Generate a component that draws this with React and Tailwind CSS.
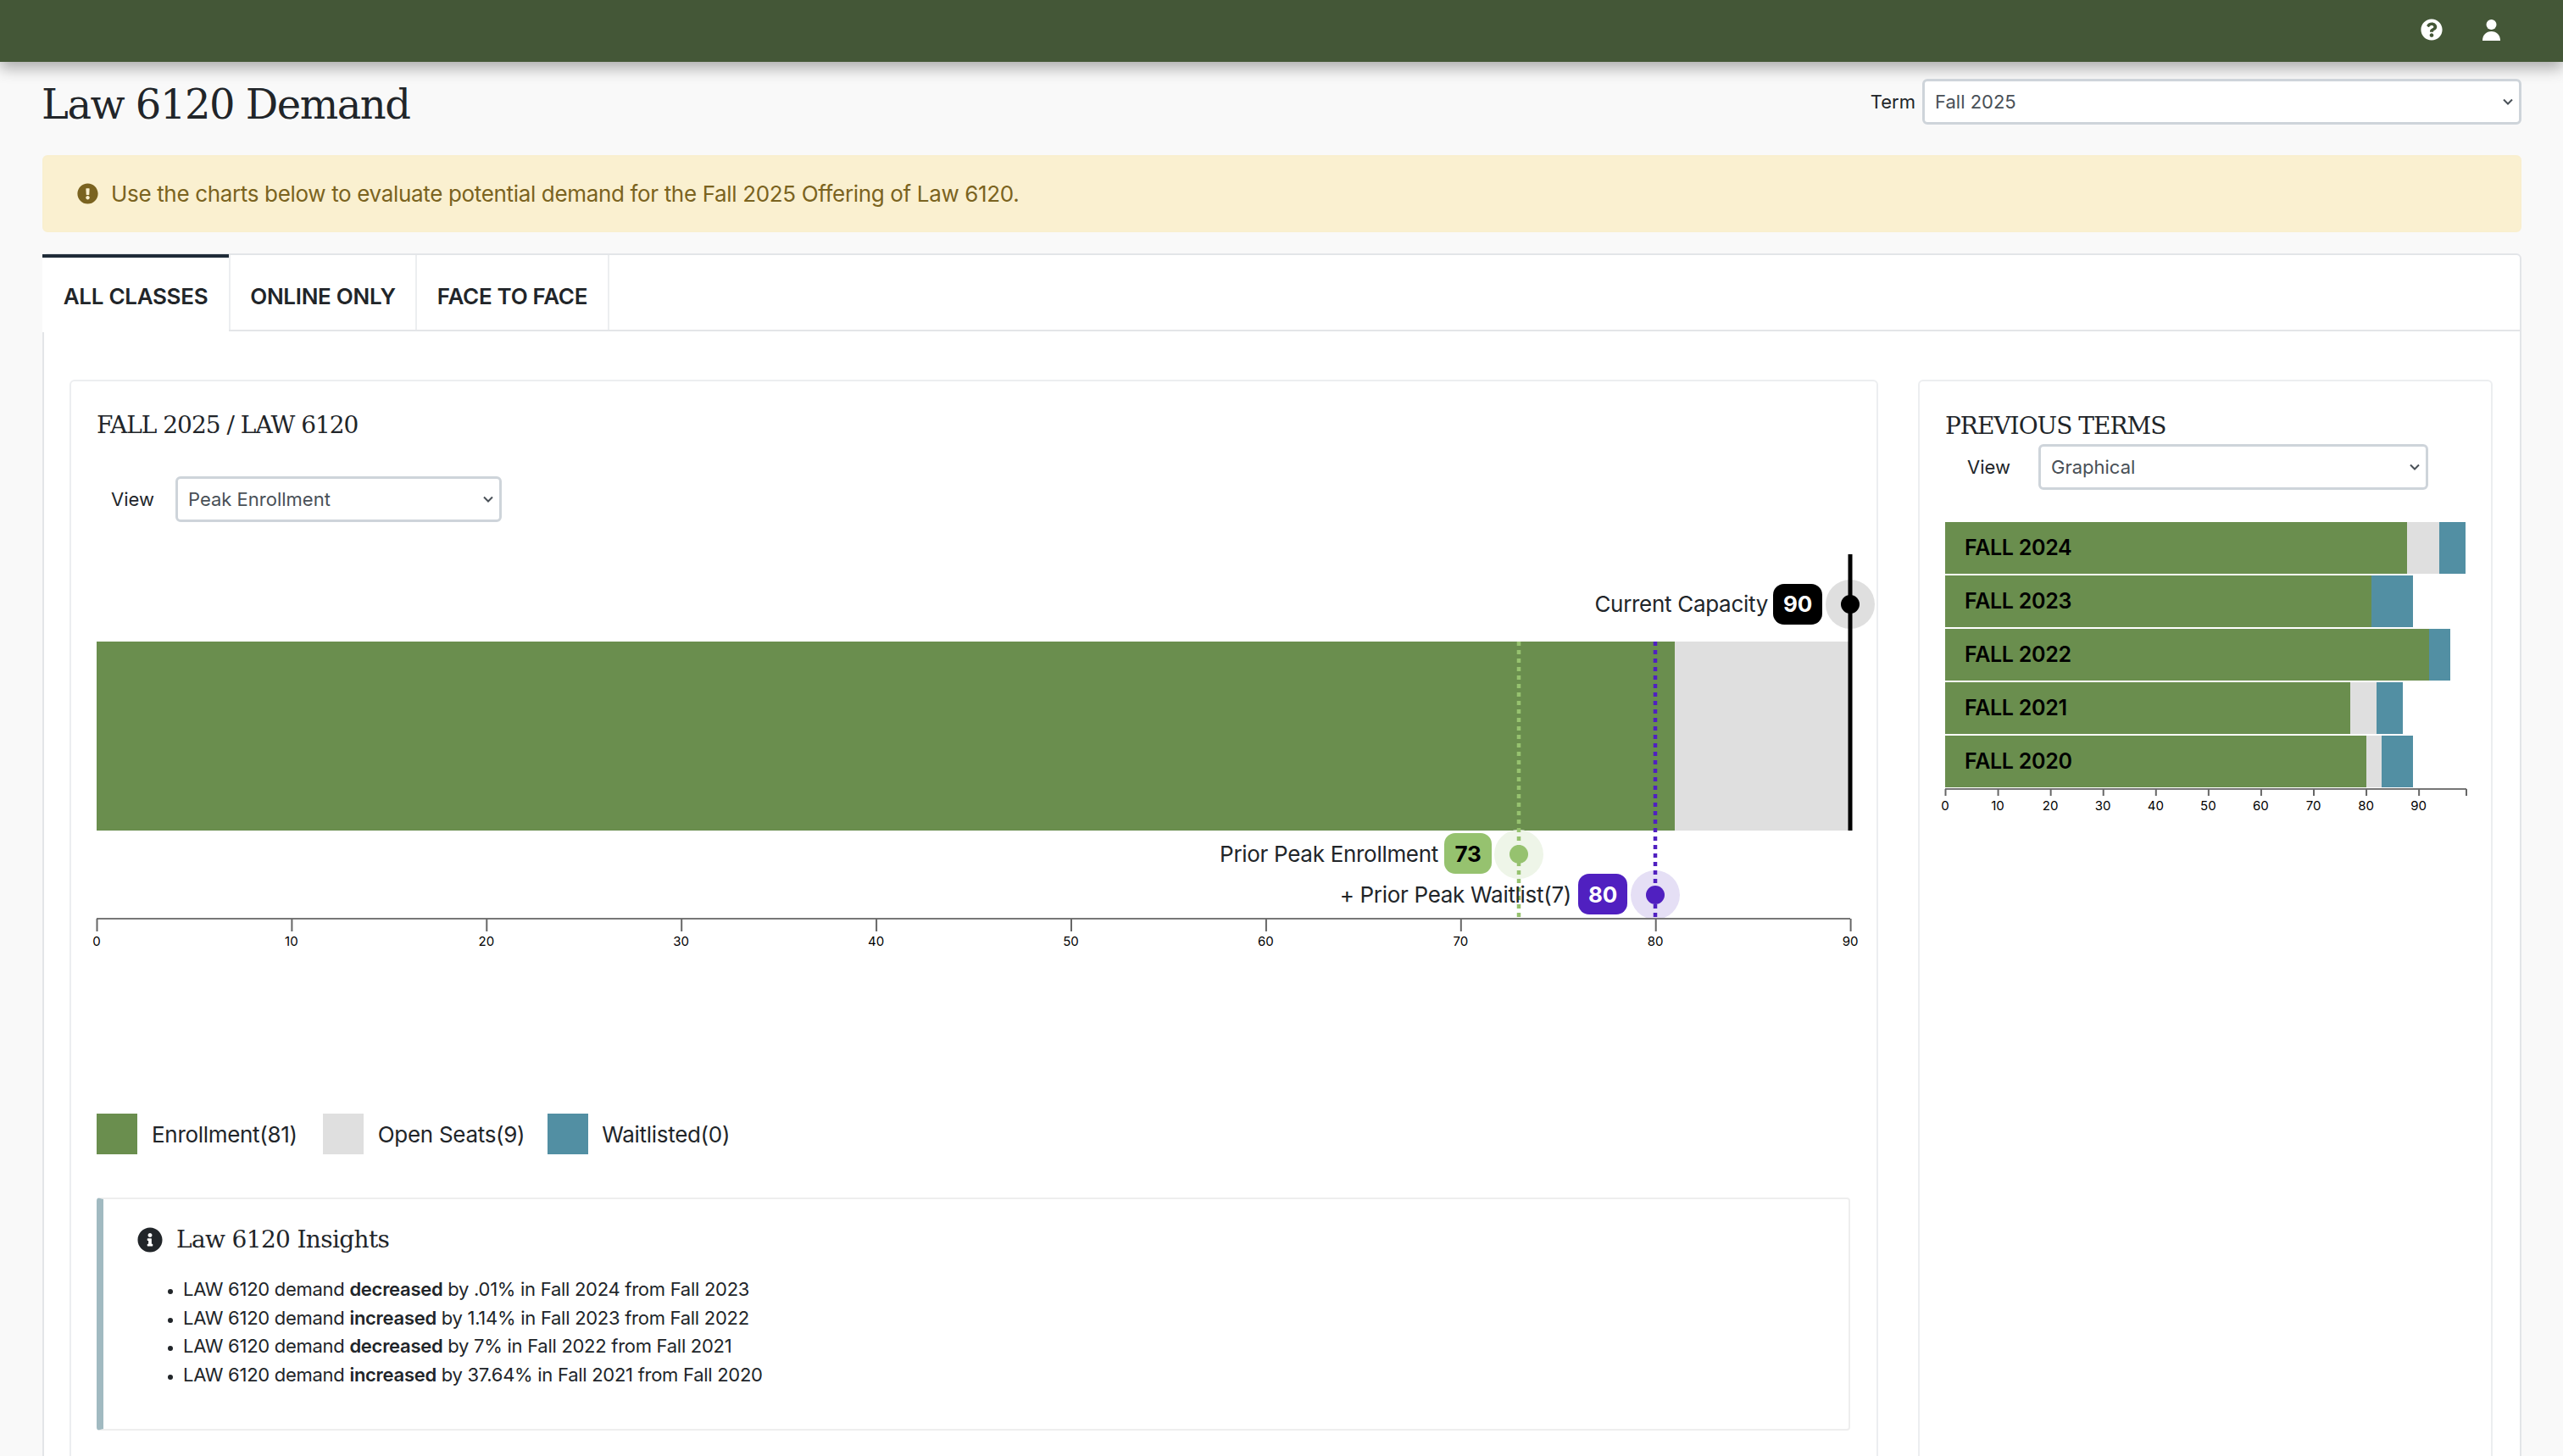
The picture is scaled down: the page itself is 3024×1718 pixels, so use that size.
import React from "react";
import { FaExclamationCircle, FaInfoCircle, FaQuestionCircle } from "react-icons/fa";

const SLAB = "font-['DejaVu_Serif',serif]";

const prevTerms = [
  { term: "FALL 2024", green: "w-[546px]", gray: "w-[38px]", teal: "w-[31px]" },
  { term: "FALL 2023", green: "w-[503px]", gray: "w-0", teal: "w-[49px]" },
  { term: "FALL 2022", green: "w-[571px]", gray: "w-0", teal: "w-[25px]" },
  { term: "FALL 2021", green: "w-[478px]", gray: "w-[31px]", teal: "w-[31px]" },
  { term: "FALL 2020", green: "w-[497px]", gray: "w-[18px]", teal: "w-[37px]" },
];

const insights = [
  ["decreased", "by .01% in Fall 2024 from Fall 2023"],
  ["increased", "by 1.14% in Fall 2023 from Fall 2022"],
  ["decreased", "by 7% in Fall 2022 from Fall 2021"],
  ["increased", "by 37.64% in Fall 2021 from Fall 2020"],
];

function Select({ value, className }) {
  return (
    <div className={"relative " + className}>
      <select
        defaultValue={value}
        className="appearance-none w-full h-full bg-white border-[3px] border-[#ced4da] rounded-[6px] pl-[12px] text-[22px] text-[#495057] font-['Inter',sans-serif]"
      >
        <option>{value}</option>
      </select>
      <svg width="12" height="8" viewBox="0 0 12 8" fill="none" className="absolute right-[10px] top-1/2 -translate-y-1/2 pointer-events-none">
        <path d="M1 1.5L6 6.5L11 1.5" stroke="#495057" strokeWidth="2" />
      </svg>
    </div>
  );
}

function UserIcon() {
  return (
    <svg width="21" height="25" viewBox="0 0 21 25" fill="#fff">
      <circle cx="10.5" cy="6" r="6" />
      <path d="M0 25C0 18 4.5 14 10.5 14S21 18 21 25Z" />
    </svg>
  );
}

function MainChart() {
  const ticks = [0, 10, 20, 30, 40, 50, 60, 70, 80, 90];
  // chart svg starts at x=114, y=640 in page terms
  return (
    <svg width="2090" height="490" className="block overflow-visible font-['Inter',sans-serif] tracking-[-0.3px]">
      <rect x="0" y="117" width="1862" height="223" fill="#6a8e4e" />
      <rect x="1862" y="117" width="207" height="223" fill="#dfdfdf" />

      <circle cx="2069" cy="73" r="29" fill="#dfdfdf" />
      <line x1="2069" y1="14" x2="2069" y2="340" stroke="#000" strokeWidth="5" />
      <circle cx="2069" cy="73" r="11" fill="#000" />
      <text x="1972" y="82" textAnchor="end" fontSize="26" fill="#212529">Current Capacity</text>
      <rect x="1978" y="49" width="58" height="48" rx="13" fill="#000" />
      <text x="2007" y="82" textAnchor="middle" fontSize="26" fontWeight="700" fill="#fff">90</text>

      <circle cx="1678" cy="368" r="29" fill="#eef5e8" />
      <line x1="1678" y1="117" x2="1678" y2="442" stroke="#96c26f" strokeWidth="4.5" strokeDasharray="5 5" />
      <circle cx="1678" cy="368" r="11" fill="#96c26f" />
      <text x="1583" y="377" textAnchor="end" fontSize="26" fill="#212529">Prior Peak Enrollment</text>
      <rect x="1590" y="343" width="56" height="48" rx="13" fill="#96c26f" />
      <text x="1618" y="377" textAnchor="middle" fontSize="26" fontWeight="700" fill="#000">73</text>

      <circle cx="1839" cy="416" r="29" fill="#e5dff5" />
      <line x1="1839" y1="117" x2="1839" y2="442" stroke="#5020c0" strokeWidth="4.5" strokeDasharray="5 5" />
      <circle cx="1839" cy="416" r="11" fill="#5020c0" />
      <text x="1740" y="425" textAnchor="end" fontSize="26" fill="#212529">+ Prior Peak Waitlist(7)</text>
      <rect x="1748" y="391" width="58" height="48" rx="13" fill="#5020c0" />
      <text x="1777" y="425" textAnchor="middle" fontSize="26" fontWeight="700" fill="#fff">80</text>

      <line x1="0" y1="444" x2="2069" y2="444" stroke="#777" strokeWidth="2" />
      {ticks.map((t) => (
        <g key={t}>
          <line x1={t * 22.99 + 0.5} y1="444" x2={t * 22.99 + 0.5} y2="459" stroke="#666" strokeWidth="2" />
          <text x={t * 22.99} y="476" textAnchor="middle" fontSize="15" letterSpacing="0" fill="#000">{t}</text>
        </g>
      ))}
    </svg>
  );
}

function PrevAxis() {
  const ticks = [0, 10, 20, 30, 40, 50, 60, 70, 80, 90];
  return (
    <svg width="640" height="34" className="block overflow-visible font-['Inter',sans-serif]">
      <line x1="0" y1="2" x2="615" y2="2" stroke="#777" strokeWidth="2" />
      <line x1="615" y1="2" x2="615" y2="10" stroke="#666" strokeWidth="2" />
      {ticks.map((t) => (
        <g key={t}>
          <line x1={t * 6.207 + 0.5} y1="2" x2={t * 6.207 + 0.5} y2="10" stroke="#666" strokeWidth="2" />
          <text x={t * 6.207} y="27" textAnchor="middle" fontSize="15" fill="#000">{t}</text>
        </g>
      ))}
    </svg>
  );
}

export default function App() {
  return (
    <div className="h-[1718px] w-[3024px] overflow-hidden bg-[#f9f9f9] font-['Inter',sans-serif] text-[#212529]">
      <header className="h-[73px] bg-[#445737] shadow-[0_8px_16px_rgba(0,0,0,0.3)] flex items-center justify-end gap-[47px] pr-[74px] pb-[3px] text-white relative">
        <FaQuestionCircle className="text-[26px]" />
        <UserIcon />
      </header>

      <main className="pl-[50px] pr-[49px]">
        <div className="flex justify-between pt-[20px] h-[110px]">
          <h1 className={SLAB + " text-[48px] leading-[60px] tracking-[-1.5px] -ml-[1px]"}>Law 6120 Demand</h1>
          <div className="flex items-start gap-[8px]">
            <span className="text-[22px] leading-[54px]">Term</span>
            <Select value="Fall 2025" className="w-[707px] h-[54px]" />
          </div>
        </div>

        <div className="h-[91px] bg-[#faf0d0] border-2 border-[#f9efcf] rounded-[6px] flex items-center pl-[39px] gap-[15px] text-[#7a6320] text-[26px] tracking-[-0.34px]">
          <FaExclamationCircle className="text-[25px]" />
          <span>Use the charts below to evaluate potential demand for the Fall 2025 Offering of Law 6120.</span>
        </div>

        <section className="mt-[25px] bg-white border-2 border-[#e3e5e8] rounded-[6px] h-[1500px]">
          <div className="flex h-[90px] border-b-2 border-[#e3e5e8] text-[26px] tracking-[-0.3px] font-semibold">
            <div className="w-[220px] h-[92px] -mt-[1px] -ml-[2px] bg-white border-t-4 border-[#1f2c38] flex items-center justify-center pt-[2px]">ALL CLASSES</div>
            <div className="w-[222px] border-x-2 border-[#eceef0] flex items-center justify-center pt-[8px]">ONLINE ONLY</div>
            <div className="w-[227px] border-r-2 border-[#eceef0] flex items-center justify-center pt-[8px]">FACE TO FACE</div>
          </div>

          <div className="flex gap-[47px] pt-[57px] px-[30px]">
            <div className="w-[2134px] h-[1400px] border-2 border-[#eceef0] rounded-[6px] px-[30px]">
              <h2 className={SLAB + " text-[28px] leading-[36px] mt-[34px] tracking-[-1px]"}>FALL 2025 / LAW 6120</h2>
              <div className="flex items-center mt-[42px] h-[54px]">
                <span className="text-[22px] ml-[17px] w-[76px]">View</span>
                <Select value="Peak Enrollment" className="w-[385px] h-[54px]" />
              </div>
              <div className="mt-[24px]">
                <MainChart />
              </div>
              <div className="flex items-center mt-[184px] text-[26px] tracking-[-0.3px]">
                <span className="w-[48px] h-[48px] bg-[#6a8e4e]" />
                <span className="ml-[17px] mr-[30px]">Enrollment(81)</span>
                <span className="w-[48px] h-[48px] bg-[#dfdfdf]" />
                <span className="ml-[17px] mr-[27px]">Open Seats(9)</span>
                <span className="w-[48px] h-[48px] bg-[#528fa3]" />
                <span className="ml-[16px]">Waitlisted(0)</span>
              </div>
              <div className="w-[2069px] h-[275px] mt-[51px] border-2 border-l-[8px] border-[#eeeeee] border-l-[#a1bac1] rounded-[4px] pl-[40px]">
                <div className="flex items-center gap-[16px] pt-[31px]">
                  <FaInfoCircle className="text-[30px]" />
                  <h3 className={SLAB + " text-[28px] leading-[34px] tracking-[-0.65px]"}>Law 6120 Insights</h3>
                </div>
                <ul className="mt-[25px] list-disc pl-[54px] text-[22px] leading-[33.5px] tracking-[-0.28px] text-[#212529] marker:text-[18px]">
                  {insights.map(([word, rest], i) => (
                    <li key={i}>
                      LAW 6120 demand <b className="font-semibold">{word}</b> {rest}
                    </li>
                  ))}
                </ul>
              </div>
            </div>

            <div className="w-[678px] h-[1400px] border-2 border-[#eceef0] rounded-[6px] px-[30px] pt-[35px]">
              <h2 className={SLAB + " text-[28px] leading-[36px] tracking-[-1px]"}>PREVIOUS TERMS</h2>
              <div className="flex items-center h-[54px] mt-[3px]">
                <span className="text-[22px] ml-[26px] w-[84px]">View</span>
                <Select value="Graphical" className="w-[460px] h-[54px]" />
              </div>
              <div className="mt-[38px] flex flex-col gap-[2px]">
                {prevTerms.map((row) => (
                  <div key={row.term} className="flex h-[61px]">
                    <div className={row.green + " bg-[#6a8e4e] flex items-center pl-[23px] text-[25px] tracking-[-0.3px] font-semibold text-black whitespace-nowrap"}>{row.term}</div>
                    <div className={row.gray + " bg-[#dfdfdf]"} />
                    <div className={row.teal + " bg-[#528fa3]"} />
                  </div>
                ))}
              </div>
              <PrevAxis />
            </div>
          </div>
        </section>
      </main>
    </div>
  );
}
